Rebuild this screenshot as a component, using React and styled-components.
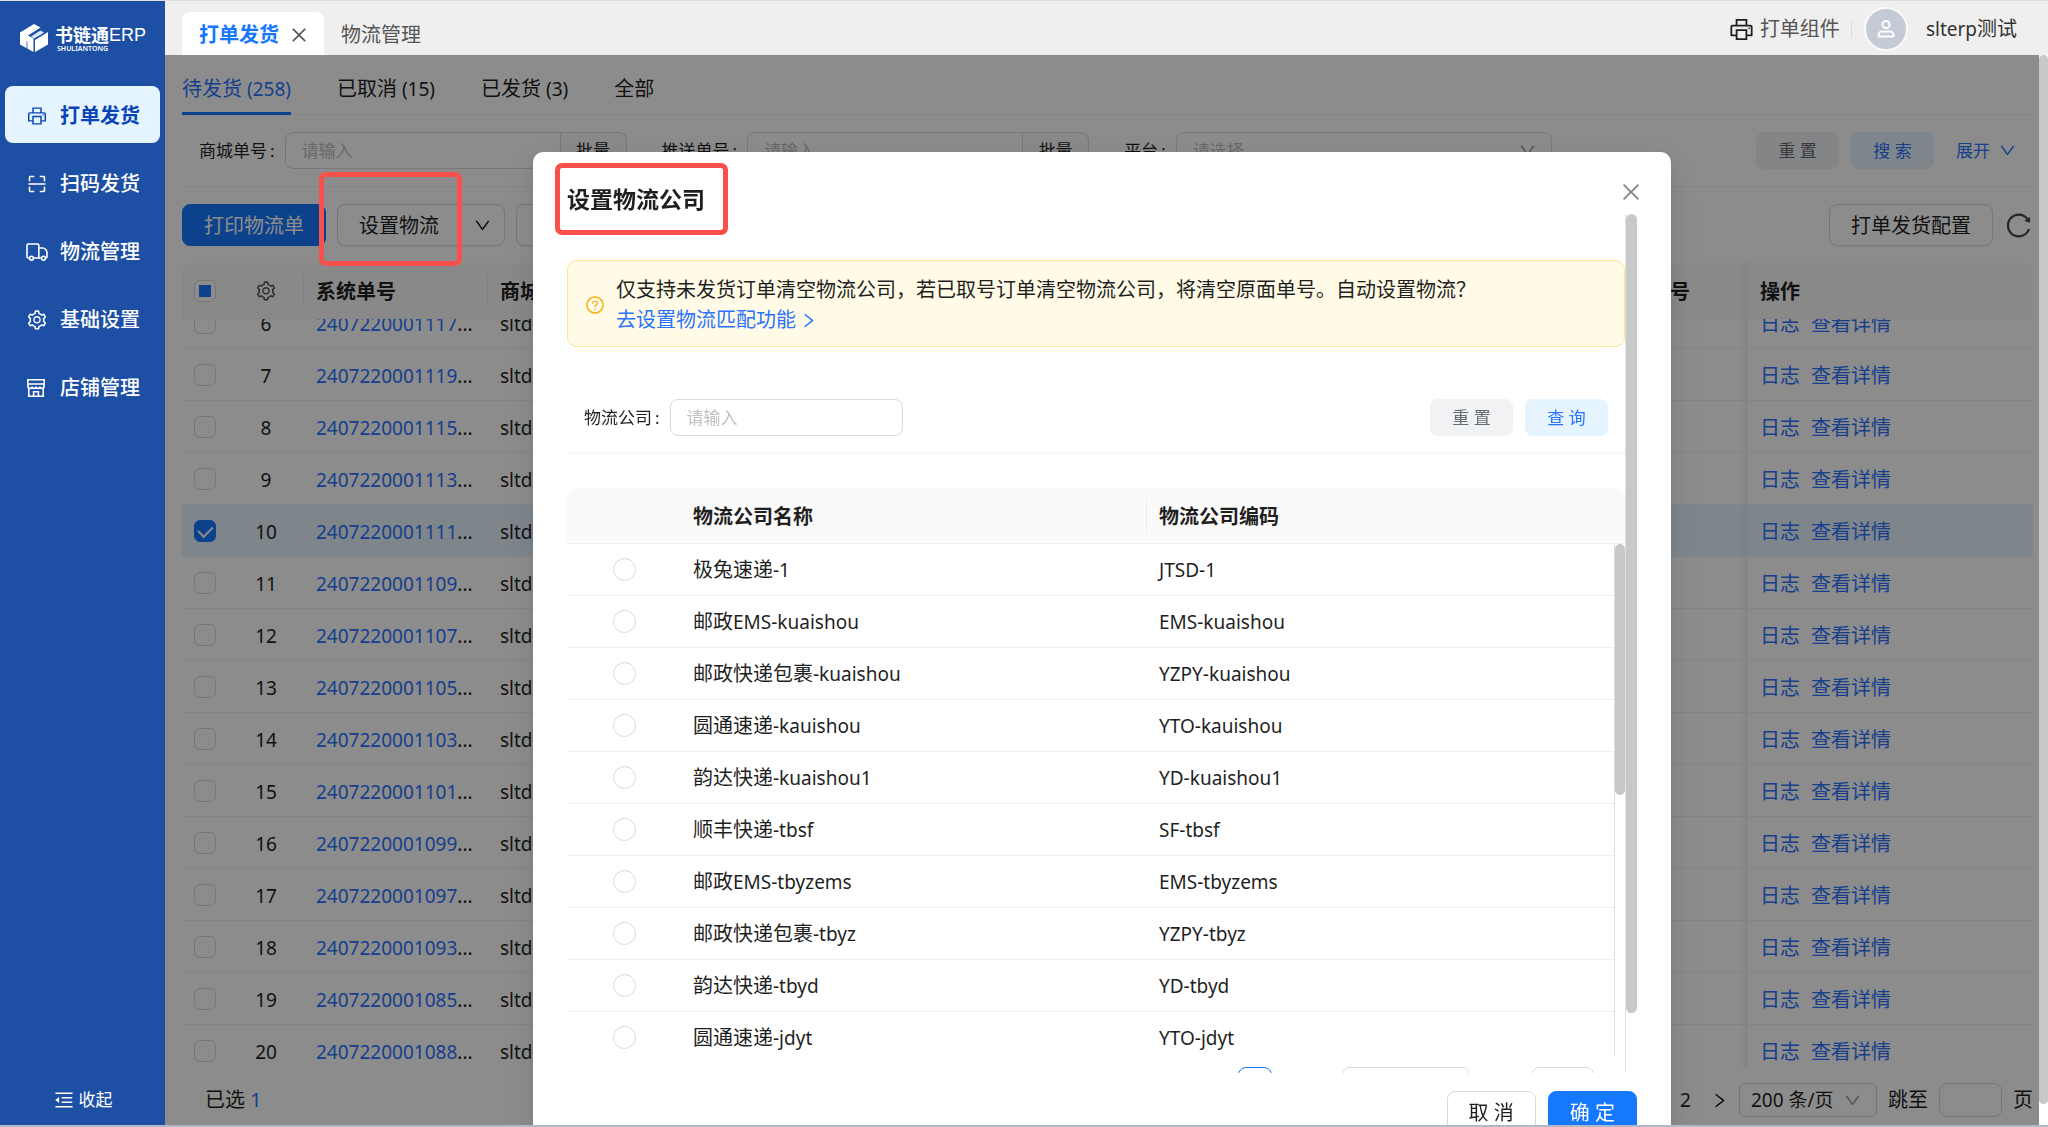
import { useEffect, useRef } from "react";
import styled, { createGlobalStyle, css } from "styled-components";
import {
  AiOutlineClose,
  AiOutlineDown,
  AiOutlineMenuFold,
  AiOutlinePrinter,
  AiOutlineQuestionCircle,
  AiOutlineReload,
  AiOutlineRight,
  AiOutlineScan,
  AiOutlineSetting,
} from "react-icons/ai";

const TruckIcon = () => (
  <svg width="22" height="22" viewBox="0 0 22 22" fill="none" stroke="currentColor" strokeWidth="1.6">
    <path d="M3.6 17H2.2A1.2 1.2 0 0 1 1 15.8V4.2A1.2 1.2 0 0 1 2.2 3H11.6A1.2 1.2 0 0 1 12.8 4.2V17H7.4" />
    <path d="M12.8 7H16.6C19 7 21 9.4 21 12V15.8A1.2 1.2 0 0 1 19.8 17H19.4M15.6 17H12.8" />
    <circle cx="5.5" cy="17.2" r="1.9" />
    <circle cx="17.5" cy="17.2" r="1.9" />
  </svg>
);

const StoreIcon = () => (
  <svg width="20" height="20" viewBox="0 0 20 20" fill="none" stroke="currentColor" strokeWidth="1.6">
    <path d="M1.8 1.8H18.2V6H1.8ZM2.8 10V18.2H17.2V10" />
    <path d="M2 6V8.4C2 11 6 11 6 8.4C6 11 10 11 10 8.4C10 11 14 11 14 8.4C14 11 18 11 18 8.4V6" />
    <path d="M7.6 18V13.8H12.4V18" />
  </svg>
);

const UserIcon = () => (
  <svg width="20" height="20" viewBox="0 0 20 20" fill="none" stroke="#fff" strokeWidth="2">
    <circle cx="10" cy="5.5" r="3.6" />
    <path d="M2.5 17.5V16C2.5 14 4.2 12.6 6 12.6H14C15.8 12.6 17.5 14 17.5 16V17.5Z" strokeLinejoin="round" />
  </svg>
);

const LogoMark = () => (
  <svg width="28" height="28" viewBox="0 0 28 28" fill="#fff">
    <path d="M14 0L20.5 3.6L8 11.5L13.5 14.5V28L0 20.5V8.5Z" />
    <path d="M15 16L28 8V20.5L15 28Z" />
    <path d="M14 14.5L21 10.5L24 8.5L20.5 6.6L11 12.5Z" opacity="0.85" />
    <path d="M7 17.5V24.6" stroke="#1d50a5" strokeWidth="0.8" />
  </svg>
);

const menu = [
  { label: "打单发货", icon: <AiOutlinePrinter />, active: true },
  { label: "扫码发货", icon: <AiOutlineScan /> },
  { label: "物流管理", icon: <TruckIcon /> },
  { label: "基础设置", icon: <AiOutlineSetting /> },
  { label: "店铺管理", icon: <StoreIcon /> },
];

const statusTabs = [
  ["待发货", "(258)"],
  ["已取消", "(15)"],
  ["已发货", "(3)"],
  ["全部"],
];

const orders = [
  [6, "2407220001117"],
  [7, "2407220001119"],
  [8, "2407220001115"],
  [9, "2407220001113"],
  [10, "2407220001111"],
  [11, "2407220001109"],
  [12, "2407220001107"],
  [13, "2407220001105"],
  [14, "2407220001103"],
  [15, "2407220001101"],
  [16, "2407220001099"],
  [17, "2407220001097"],
  [18, "2407220001093"],
  [19, "2407220001085"],
  [20, "2407220001088"],
];

const companies = [
  ["极兔速递", "-1", "JTSD-1"],
  ["邮政", "EMS-kuaishou", "EMS-kuaishou"],
  ["邮政快递包裹", "-kuaishou", "YZPY-kuaishou"],
  ["圆通速递", "-kauishou", "YTO-kauishou"],
  ["韵达快递", "-kuaishou1", "YD-kuaishou1"],
  ["顺丰快递", "-tbsf", "SF-tbsf"],
  ["邮政", "EMS-tbyzems", "EMS-tbyzems"],
  ["邮政快递包裹", "-tbyz", "YZPY-tbyz"],
  ["韵达快递", "-tbyd", "YD-tbyd"],
  ["圆通速递", "-jdyt", "YTO-jdyt"],
];

const OrderTable = () => {
  const scroller = useRef(null);

  useEffect(() => {
    scroller.current.scrollTop = 22;
  }, []);

  return (
    <StyledScroller ref={scroller}>
      <StyledTable>
        <colgroup>
          <StyledCol $width={46} />
          <StyledCol $width={76} />
          <StyledCol $width={184} />
          <col />
          <StyledCol $width={150} />
          <StyledCol $width={285} />
        </colgroup>
        <thead>
          <tr>
            <StyledTh $center>
              <StyledCheckbox type="checkbox" aria-label="全选" $partial />
            </StyledTh>
            <StyledTh $center $divider>
              <StyledGear />
            </StyledTh>
            <StyledTh $divider>系统单号</StyledTh>
            <StyledTh>商城单号</StyledTh>
            <StyledTh $shade>物流单号</StyledTh>
            <StyledTh>操作</StyledTh>
          </tr>
        </thead>
        <tbody>
          {orders.map(([no, id]) => (
            <StyledRow key={no} $selected={no === 10}>
              <StyledTd $center>
                <StyledCheckbox type="checkbox" aria-label={id} defaultChecked={no === 10} />
              </StyledTd>
              <StyledTd $center>
                <Latin>{no}</Latin>
              </StyledTd>
              <StyledTd>
                <Latin>
                  <StyledLink href="#">{id}</StyledLink>...
                </Latin>
              </StyledTd>
              <StyledTd>
                <Latin>sltd</Latin>
              </StyledTd>
              <StyledTd $shade />
              <StyledTd>
                <StyledActions>
                  <StyledLink href="#">日志</StyledLink>
                  <StyledLink href="#">查看详情</StyledLink>
                </StyledActions>
              </StyledTd>
            </StyledRow>
          ))}
        </tbody>
      </StyledTable>
    </StyledScroller>
  );
};

const LogisticsModal = () => (
  <StyledModal role="dialog" aria-labelledby="modal-title">
    <StyledModalHeader>
      <StyledTitle id="modal-title">
        设置物流公司
        <TitleFrame />
      </StyledTitle>
      <StyledClose aria-label="关闭">
        <AiOutlineClose />
      </StyledClose>
    </StyledModalHeader>

    <StyledModalBody>
      <StyledModalContent>
        <StyledAlert>
          <AiOutlineQuestionCircle />
          <div>
            <p>仅支持未发货订单清空物流公司，若已取号订单清空物流公司，将清空原面单号。自动设置物流？</p>
            <StyledLink href="#">
              去设置物流匹配功能 <AiOutlineRight />
            </StyledLink>
          </div>
        </StyledAlert>

        <StyledModalForm>
          <StyledLabel htmlFor="company">物流公司</StyledLabel>
          <StyledInput id="company" placeholder="请输入" $width={233} />
          <StyledFormActions>
            <StyledSmallButton>重 置</StyledSmallButton>
            <StyledSmallButton $blue>查 询</StyledSmallButton>
          </StyledFormActions>
        </StyledModalForm>

        <StyledCompanyTable>
          <StyledCompanyScroll>
            <StyledTable>
              <colgroup>
                <StyledCol $width={114} />
                <StyledCol $width={466} />
                <col />
              </colgroup>
              <thead>
                <tr>
                  <StyledTh />
                  <StyledTh $divider>物流公司名称</StyledTh>
                  <StyledTh>物流公司编码</StyledTh>
                </tr>
              </thead>
              <tbody>
                {companies.map(([name, suffix, code]) => (
                  <StyledRow key={code}>
                    <StyledTd $center>
                      <StyledRadio type="radio" name="company" aria-label={code} />
                    </StyledTd>
                    <StyledTd>
                      {name}
                      <Latin>{suffix}</Latin>
                    </StyledTd>
                    <StyledTd>
                      <Latin>{code}</Latin>
                    </StyledTd>
                  </StyledRow>
                ))}
              </tbody>
            </StyledTable>
          </StyledCompanyScroll>
          <InnerTrack>
            <StyledThumb $share={49} />
          </InnerTrack>
        </StyledCompanyTable>

        <StyledModalPager>
          <StyledPage aria-label="第一页" $current />
          <StyledPageSize aria-label="每页条数" $width={126} />
          <StyledJump aria-label="页码" />
        </StyledModalPager>
      </StyledModalContent>
      <BodyTrack>
        <StyledThumb $share={93} />
      </BodyTrack>
    </StyledModalBody>

    <StyledModalFooter>
      <StyledButton>取 消</StyledButton>
      <StyledButton $primary>确 定</StyledButton>
    </StyledModalFooter>
  </StyledModal>
);

const App = () => (
  <StyledApp>
    <GlobalStyle />
    <StyledSidebar>
      <StyledLogo>
        <LogoMark />
        <div>
          <StyledBrand>
            书链通<span>ERP</span>
          </StyledBrand>
          <StyledBrandSub>SHULIANTONG</StyledBrandSub>
        </div>
      </StyledLogo>
      <StyledNav>
        {menu.map(({ label, icon, active }) => (
          <StyledNavItem key={label} href="#" $active={active}>
            <span>{icon}</span>
            {label}
          </StyledNavItem>
        ))}
      </StyledNav>
      <StyledCollapse>
        <AiOutlineMenuFold />
        收起
      </StyledCollapse>
    </StyledSidebar>

    <StyledMain>
      <StyledHeader>
        <StyledPageTab $active>
          打单发货
          <AiOutlineClose />
        </StyledPageTab>
        <StyledPageTab>物流管理</StyledPageTab>
        <StyledUser>
          <StyledPlugin>
            <AiOutlinePrinter />
            打单组件
          </StyledPlugin>
          <StyledAvatar>
            <UserIcon />
          </StyledAvatar>
          <StyledUserName>
            <Latin>slterp</Latin>测试
          </StyledUserName>
        </StyledUser>
      </StyledHeader>

      <StyledBody>
        <StyledContent>
          <StyledTabs>
            {statusTabs.map(([name, count], i) => (
              <StyledTab key={name} $active={i === 0}>
                {name}
                {count && <Latin> {count}</Latin>}
              </StyledTab>
            ))}
          </StyledTabs>

          <StyledFilters>
            <StyledLabel htmlFor="mall">商城单号</StyledLabel>
            <StyledInputGroup>
              <StyledInput id="mall" placeholder="请输入" />
              <button>批量</button>
            </StyledInputGroup>
            <StyledLabel htmlFor="push">推送单号</StyledLabel>
            <StyledInputGroup>
              <StyledInput id="push" placeholder="请输入" />
              <button>批量</button>
            </StyledInputGroup>
            <StyledLabel htmlFor="platform">平台</StyledLabel>
            <StyledSelectWrap>
              <select id="platform">
                <option>请选择</option>
              </select>
              <AiOutlineDown />
            </StyledSelectWrap>
            <StyledFormActions>
              <StyledSmallButton>重 置</StyledSmallButton>
              <StyledSmallButton $blue>搜 索</StyledSmallButton>
              <StyledExpand>
                展开
                <AiOutlineDown />
              </StyledExpand>
            </StyledFormActions>
          </StyledFilters>

          <StyledToolbar>
            <StyledButton $primary>打印物流单</StyledButton>
            <StyledSplit>
              <StyledButton>设置物流</StyledButton>
              <StyledButton aria-label="更多">
                <AiOutlineDown />
              </StyledButton>
              <ButtonFrame />
            </StyledSplit>
            <StyledButton>更多操作</StyledButton>
            <StyledToolbarRight>
              <StyledButton>打单发货配置</StyledButton>
              <StyledRefresh aria-label="刷新">
                <AiOutlineReload />
              </StyledRefresh>
            </StyledToolbarRight>
          </StyledToolbar>

          <OrderTable />

          <StyledFooter>
            <p>
              已选 <b>1</b>
            </p>
            <StyledPager>
              <StyledPages>
                <StyledPage>2</StyledPage>
                <StyledPage aria-label="下一页">
                  <AiOutlineRight />
                </StyledPage>
              </StyledPages>
              <StyledPageSizeWrap>
                <StyledPageSize aria-label="每页条数" $width={138}>
                  <option>200 条/页</option>
                </StyledPageSize>
                <AiOutlineDown />
              </StyledPageSizeWrap>
              <span>跳至</span>
              <StyledJump aria-label="页码" />
              <span>页</span>
            </StyledPager>
          </StyledFooter>
        </StyledContent>

        <StyledPageTrack>
          <StyledThumb $share={98} />
        </StyledPageTrack>

        <StyledMask>
          <LogisticsModal />
        </StyledMask>
      </StyledBody>
    </StyledMain>
  </StyledApp>
);

const GlobalStyle = createGlobalStyle`
  * {
    box-sizing: border-box;
  }
  body {
    margin: 0;
    color: #1f1f1f;
    font-family: "Noto Sans", "Noto Sans CJK SC", sans-serif;
    font-size: 20px;
    line-height: 30px;
  }
  button, input, select {
    margin: 0;
    padding: 0;
    border: none;
    background: none;
    color: inherit;
    font: inherit;
  }
  p {
    margin: 0;
  }
  a {
    text-decoration: none;
  }
  svg {
    flex: none;
    display: block;
  }
`;

const StyledApp = styled.div`
  display: flex;
  height: 100vh;
  overflow: hidden;
  border-top: 1px solid #dedede;
  border-bottom: 2px solid #b4b8c6;
`;

const StyledSidebar = styled.aside`
  width: 165px;
  flex: none;
  display: flex;
  flex-direction: column;
  background: #1d50a5;
  color: #fff;
`;

const StyledLogo = styled.div`
  height: 85px;
  display: flex;
  align-items: flex-start;
  gap: 7px;
  padding: 23px 0 0 20px;
`;

const StyledBrand = styled.div`
  display: flex;
  align-items: center;
  height: 22px;
  font-size: 18px;
  font-weight: 600;
  & > span {
    font-family: "Liberation Sans", sans-serif;
    font-weight: 400;
  }
`;

const StyledBrandSub = styled.div`
  padding-left: 2px;
  font-size: 7px;
  font-weight: 600;
  line-height: 6px;
`;

const StyledNav = styled.nav`
  flex: 1;
  display: flex;
  flex-direction: column;
  gap: 11px;
  padding: 0 5px;
`;

const StyledNavItem = styled.a`
  height: 57px;
  display: flex;
  align-items: center;
  padding: 2px 0 0 21px;
  border-radius: 8px;
  color: #fff;
  font-weight: 500;
  & > span {
    width: 34px;
    font-size: 22px;
  }
  ${({ $active }) =>
    $active &&
    css`
      background: #e6f4ff;
      color: #0a45b8;
      font-weight: 700;
    `}
`;

const StyledCollapse = styled.button`
  display: flex;
  align-items: center;
  justify-content: center;
  gap: 4px;
  padding-bottom: 10px;
  font-size: 17px;
  & > svg {
    font-size: 22px;
  }
`;

const StyledMain = styled.main`
  flex: 1;
  min-width: 0;
  display: flex;
  flex-direction: column;
`;

const StyledHeader = styled.header`
  height: 54px;
  flex: none;
  display: flex;
  align-items: flex-end;
  padding-left: 17px;
  background: #efefef;
`;

const StyledPageTab = styled.button`
  height: 43px;
  display: flex;
  align-items: center;
  gap: 10px;
  padding: 2px 15px 0 17px;
  border-radius: 8px 8px 0 0;
  color: ${({ $active }) => ($active ? "#1677ff" : "#555")};
  background: ${({ $active }) => ($active ? "#fff" : "none")};
  font-weight: ${({ $active }) => ($active ? 700 : 400)};
  & > svg {
    color: #555;
    font-size: 20px;
  }
`;

const StyledUser = styled.div`
  align-self: center;
  display: flex;
  align-items: center;
  margin-left: auto;
  padding: 2px 31px 0 0;
`;

const StyledPlugin = styled.button`
  display: flex;
  align-items: center;
  gap: 5px;
  padding-right: 12px;
  color: #555;
  background: linear-gradient(#ddd, #ddd) right center / 1px 18px no-repeat;
  & > svg {
    color: #1f1f1f;
    font-size: 27px;
  }
`;

const StyledAvatar = styled.div`
  width: 44px;
  height: 44px;
  display: flex;
  align-items: center;
  justify-content: center;
  margin: 0 18px 0 12px;
  border: 2px solid #fafafa;
  border-radius: 50%;
  background: #c4cad6;
`;

const StyledUserName = styled.span`
  color: #333;
`;

const StyledBody = styled.div`
  position: relative;
  flex: 1;
  min-height: 0;
  display: flex;
`;

const StyledContent = styled.section`
  flex: 1;
  min-width: 0;
  display: flex;
  flex-direction: column;
  padding: 0 6px 0 17px;
`;

const StyledPageTrack = styled.div`
  width: 9px;
  flex: none;
`;

const StyledThumb = styled.div`
  height: ${({ $share }) => $share}%;
  border-radius: 6px;
  background: #c8c8c8;
`;

const StyledTabs = styled.div`
  height: 60px;
  flex: none;
  display: flex;
  gap: 46px;
  border-bottom: 1px solid #f0f0f0;
`;

const StyledTab = styled.button`
  height: 60px;
  padding-top: 10px;
  border-bottom: 3px solid ${({ $active }) => ($active ? "#1677ff" : "transparent")};
  color: ${({ $active }) => ($active ? "#2b73ff" : "inherit")};
`;

const StyledFilters = styled.div`
  flex: none;
  display: flex;
  align-items: center;
  padding: 17px 16px 17px 17px;
  border-bottom: 1px solid #f0f0f0;
  font-size: 17px;
`;

const StyledLabel = styled.label`
  flex: none;
  font-size: 17px;
  &::after {
    content: ":";
    margin: 0 10px 0 3px;
  }
`;

const StyledInput = styled.input`
  width: ${({ $width }) => ($width ? $width + "px" : "100%")};
  height: 37px;
  padding: 0 16px;
  border: 1px solid #d9d9d9;
  border-radius: 8px;
  font-size: 17px;
  &::placeholder {
    color: #bfbfbf;
    opacity: 1;
  }
`;

const StyledInputGroup = styled.div`
  flex: 0 1 342px;
  display: flex;
  margin-right: 35px;
  & > input {
    flex: 1;
    min-width: 0;
    border-radius: 8px 0 0 8px;
  }
  & > button {
    width: 66px;
    border: 1px solid #d9d9d9;
    border-left: none;
    border-radius: 0 8px 8px 0;
    background: #fafafa;
  }
`;

const StyledSelectWrap = styled.div`
  flex: 0 1 376px;
  display: flex;
  align-items: center;
  height: 37px;
  padding: 0 14px 0 16px;
  border: 1px solid #d9d9d9;
  border-radius: 8px;
  color: #bfbfbf;
  & > select {
    flex: 1;
    appearance: none;
  }
  & > svg {
    color: #999;
    font-size: 19px;
  }
`;

const StyledFormActions = styled.div`
  display: flex;
  align-items: center;
  gap: 12px;
  margin-left: auto;
`;

const StyledSmallButton = styled.button`
  width: 83px;
  height: 37px;
  border-radius: 8px;
  background: ${({ $blue }) => ($blue ? "#e6f4ff" : "#f1f2f4")};
  color: ${({ $blue }) => ($blue ? "#2b73ff" : "#666b75")};
  font-size: 17px;
`;

const StyledExpand = styled.button`
  display: flex;
  align-items: center;
  gap: 8px;
  padding-left: 10px;
  color: #2b73ff;
  & > svg {
    font-size: 19px;
  }
`;

const StyledToolbar = styled.div`
  flex: none;
  display: flex;
  gap: 11px;
  padding: 17px 0;
`;

const StyledButton = styled.button`
  height: 42px;
  padding: 2px 21px 0;
  border: 1px solid ${({ $primary }) => ($primary ? "#1677ff" : "#d9d9d9")};
  border-radius: 8px;
  background: ${({ $primary }) => ($primary ? "#1677ff" : "#fff")};
  color: ${({ $primary }) => ($primary ? "#fff" : "inherit")};
  box-shadow: 0 2px 0 rgba(0, 0, 0, 0.02);
  white-space: nowrap;
`;

const StyledSplit = styled.div`
  position: relative;
  display: flex;
  & > button:first-child {
    border-right: none;
    border-radius: 8px 0 0 8px;
  }
  & > button:nth-child(2) {
    padding: 0 12px;
    border-radius: 0 8px 8px 0;
    font-size: 19px;
  }
`;

const StyledFrame = styled.div`
  position: absolute;
  z-index: 20;
  border: 5px solid #fa4f4a;
  border-radius: 7px;
  pointer-events: none;
`;

const ButtonFrame = styled(StyledFrame)`
  inset: -32px 43px -20px -18px;
`;

const TitleFrame = styled(StyledFrame)`
  inset: -21px -23px -21px -12px;
`;

const StyledToolbarRight = styled.div`
  display: flex;
  align-items: center;
  gap: 11px;
  margin-left: auto;
`;

const StyledRefresh = styled.button`
  color: #444;
  font-size: 29px;
`;

const StyledScroller = styled.div`
  flex: 1;
  min-height: 0;
  overflow: hidden;
  border-radius: 8px 8px 0 0;
  td:not(:first-child) {
    padding-top: 3px;
  }
`;

const StyledTable = styled.table`
  width: 100%;
  table-layout: fixed;
  border-collapse: separate;
  border-spacing: 0;
`;

const StyledCol = styled.col`
  width: ${({ $width }) => $width}px;
`;

const StyledTh = styled.th`
  position: sticky;
  top: 0;
  z-index: 2;
  height: 56px;
  padding: 2px 12px 0;
  border-bottom: 1px solid #f0f0f0;
  background: ${({ $divider }) => ($divider ? "linear-gradient(#ececec, #ececec) right center / 1px 32px no-repeat" : "none")} #fafafa;
  box-shadow: ${({ $shade }) => ($shade ? "inset -12px 0 10px -10px rgba(5, 5, 5, 0.08)" : "none")};
  text-align: left;
  font-weight: 700;
  ${({ $center }) =>
    $center &&
    css`
      padding: 0;
      & > * {
        margin: 0 auto;
      }
    `}
`;

const StyledRow = styled.tr`
  background: ${({ $selected }) => ($selected ? "#e6f4ff" : "#fff")};
`;

const StyledTd = styled.td`
  height: 52px;
  padding: 0 12px;
  border-bottom: 1px solid #f0f0f0;
  box-shadow: ${({ $shade }) => ($shade ? "inset -12px 0 10px -10px rgba(5, 5, 5, 0.08)" : "none")};
  white-space: nowrap;
  ${({ $center }) =>
    $center &&
    css`
      padding: 0;
      text-align: center;
      & > input {
        margin: 0 auto;
      }
    `}
`;

const StyledGear = styled(AiOutlineSetting)`
  color: #555;
  font-size: 22px;
`;

const StyledCheckbox = styled.input`
  appearance: none;
  display: block;
  width: 22px;
  height: 22px;
  border: 1px solid #d9d9d9;
  border-radius: 6px;
  background: #fff;
  &:checked {
    border-color: #1677ff;
    background: #1677ff;
  }
  &:checked::after {
    content: "";
    display: block;
    width: 7px;
    height: 12px;
    margin: 2px auto;
    border: solid #fff;
    border-width: 0 2px 2px 0;
    rotate: 45deg;
  }
  ${({ $partial }) =>
    $partial &&
    css`
      &::after {
        content: "";
        display: block;
        width: 12px;
        height: 12px;
        margin: 4px;
        background: #1677ff;
      }
    `}
`;

const StyledRadio = styled.input`
  appearance: none;
  display: block;
  width: 23px;
  height: 23px;
  border: 1px solid #d9d9d9;
  border-radius: 50%;
`;

const Latin = styled.span`
  font-size: 19px;
`;

const StyledLink = styled.a`
  color: #2b73ff;
`;

const StyledActions = styled.div`
  display: flex;
  gap: 11px;
`;

const StyledFooter = styled.footer`
  height: 56px;
  flex: none;
  display: flex;
  align-items: center;
  justify-content: space-between;
  padding: 6px 0 0 23px;
  b {
    color: #2b73ff;
    font-weight: 400;
  }
`;

const StyledPager = styled.div`
  display: flex;
  align-items: center;
  gap: 11px;
`;

const StyledModalPager = styled.div`
  display: flex;
  justify-content: flex-end;
  align-items: center;
  gap: 62px;
  padding: 11px 31px 0 0;
  & > button {
    margin-right: 9px;
  }
`;

const StyledPages = styled.div`
  display: flex;
  gap: 17px;
`;

const StyledPage = styled.button`
  width: ${({ $current }) => ($current ? 34 : 17)}px;
  height: 34px;
  display: flex;
  align-items: center;
  justify-content: center;
  border: ${({ $current }) => ($current ? "1px solid #1677ff" : "none")};
  border-radius: 8px;
  font-size: 19px;
`;

const StyledPageSizeWrap = styled.div`
  display: flex;
  align-items: center;
  & > svg {
    margin: 0 15px 0 -34px;
    color: #999;
    font-size: 19px;
  }
`;

const StyledPageSize = styled.select`
  appearance: none;
  width: ${({ $width }) => $width}px;
  height: 34px;
  padding-left: 11px;
  border: 1px solid #d9d9d9;
  border-radius: 6px;
  font-size: 19px;
`;

const StyledJump = styled.input`
  width: 63px;
  height: 34px;
  border: 1px solid #d9d9d9;
  border-radius: 8px;
`;

const StyledMask = styled.div`
  position: absolute;
  inset: 0 9px 0 0;
  z-index: 10;
  overflow: hidden;
  padding-top: 97px;
  background: rgba(0, 0, 0, 0.45);
`;

const StyledModal = styled.div`
  max-width: 1138px;
  margin: 0 auto;
  border-radius: 10px;
  background: #fff;
  box-shadow: 0 8px 20px rgba(0, 0, 0, 0.08), 0 4px 8px -5px rgba(0, 0, 0, 0.12),
    0 11px 35px 10px rgba(0, 0, 0, 0.05);
`;

const StyledModalHeader = styled.div`
  height: 62px;
  display: flex;
  align-items: flex-end;
  justify-content: space-between;
  padding: 28px 28px 0 34px;
`;

const StyledTitle = styled.div`
  position: relative;
  font-size: 23px;
  font-weight: 700;
`;

const StyledClose = styled.button`
  align-self: flex-start;
  color: #888;
  font-size: 24px;
`;

const StyledModalBody = styled.div`
  display: flex;
  height: calc(100vh - 268px);
  padding: 0 34px;
  overflow: hidden;
`;

const StyledModalContent = styled.div`
  flex: 1;
  min-width: 0;
  padding-top: 46px;
`;

const BodyTrack = styled.div`
  width: 12px;
  flex: none;
  border-left: 1px solid #e0e0e0;
`;

const StyledAlert = styled.div`
  display: flex;
  align-items: center;
  gap: 11px;
  padding: 14px 17px 11px;
  border: 1px solid #ffe58f;
  border-radius: 10px;
  background: #fffbe6;
  & > svg {
    color: #faad14;
    font-size: 20px;
  }
  a {
    display: flex;
    align-items: center;
    gap: 3px;
  }
  a > svg {
    font-size: 19px;
  }
`;

const StyledModalForm = styled.div`
  display: flex;
  align-items: center;
  margin: 52px 0 34px;
  padding: 0 17px 16px;
  border-bottom: 2px solid #f7f7f7;
`;

const StyledCompanyTable = styled.div`
  position: relative;
`;

const StyledCompanyScroll = styled.div`
  height: 568px;
  overflow: hidden;
  border-radius: 10px 10px 0 0;
`;

const InnerTrack = styled.div`
  position: absolute;
  inset: 56px 0 0 auto;
  width: 11px;
  border-left: 1px solid #dcdcdc;
  background: #fff;
`;

const StyledModalFooter = styled.div`
  display: flex;
  justify-content: flex-end;
  gap: 12px;
  padding: 18px 34px 24px;
`;

export default App;
